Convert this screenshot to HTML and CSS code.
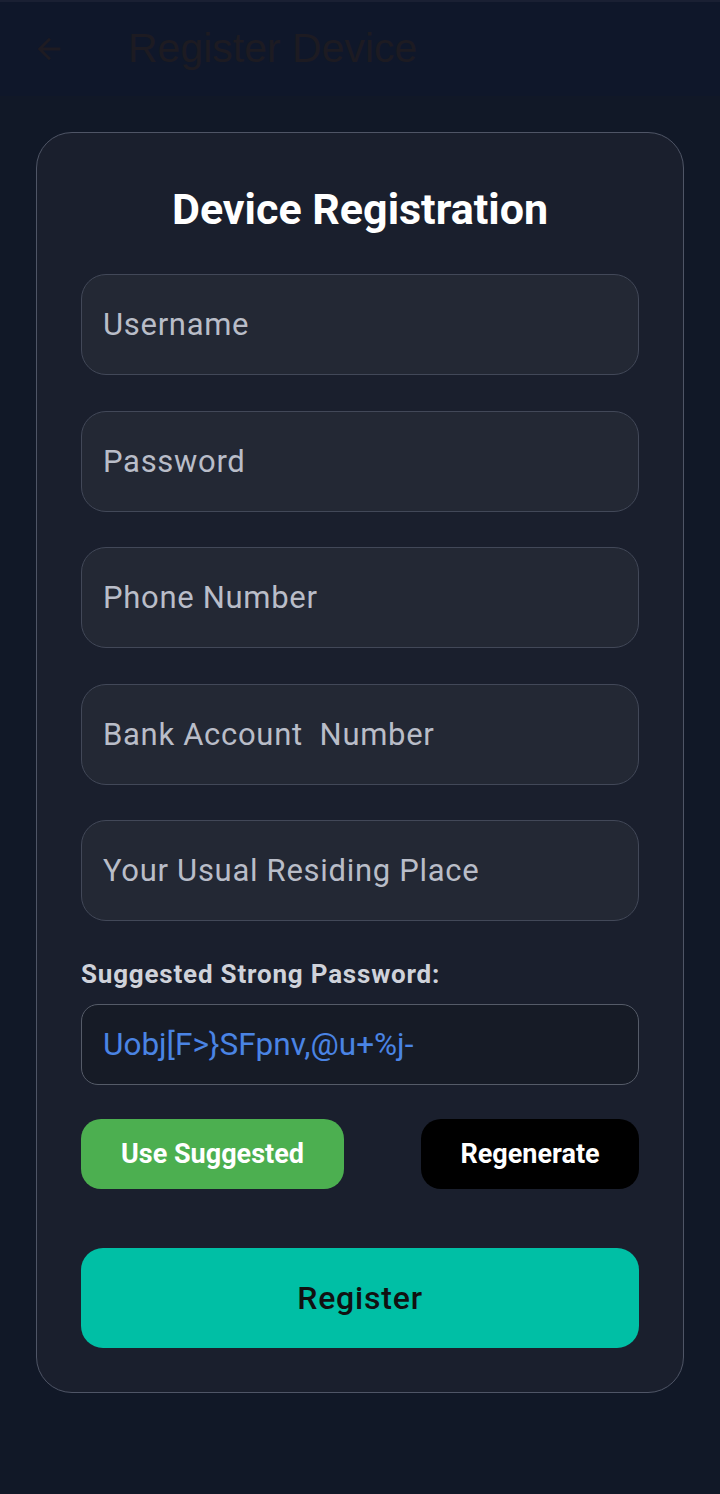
FILE: index.html
```html
<!DOCTYPE html>
<html lang="en">
<head>
<meta charset="utf-8">
<title>Register Device</title>
<link rel="stylesheet" href="styles.css">
</head>
<body>
<header class="appbar">
  <svg class="back" viewBox="0 0 24 24" width="34" height="34" aria-hidden="true"><path d="M20 11H7.83l5.59-5.59L12 4l-8 8 8 8 1.41-1.41L7.83 13H20v-2z"/></svg>
  <span class="appbar-title">Register Device</span>
</header>
<main class="page">
  <section class="card">
    <h1 class="card-title">Device Registration</h1>
    <div class="fields">
      <div class="field">Username</div>
      <div class="field">Password</div>
      <div class="field">Phone Number</div>
      <div class="field">Bank Account&nbsp; Number</div>
      <div class="field">Your Usual Residing Place</div>
    </div>
    <div class="suggest-label">Suggested Strong Password:</div>
    <div class="suggest-box">Uobj[F&gt;}SFpnv,@u+%j-</div>
    <div class="actions">
      <button class="btn btn-green">Use Suggested</button>
      <button class="btn btn-black">Regenerate</button>
    </div>
    <button class="btn-register">Register</button>
  </section>
</main>
</body>
</html>
```
FILE: styles.css
```css
* { box-sizing: border-box; }
html, body {
  margin: 0;
  padding: 0;
  background: #111827;
  font-family: Roboto, "Noto Sans", Arial, sans-serif;
  width: 720px;
  height: 1494px;
  overflow: hidden;
}
.appbar {
  height: 96px;
  background: #0f172a;
  display: flex;
  align-items: center;
  padding-left: 32px;
  border-top: 2px solid #1a2033;
}
.back {
  fill: #1e1b22;
  margin-right: 62px;
}
.appbar-title {
  font-family: "Liberation Sans", Arial, sans-serif;
  font-size: 41px;
  color: #1d1b22;
  margin-top: -2px;
}
.page {
  padding: 36px 36px 0;
}
.card {
  background: #1a1f2d;
  border: 1.5px solid #4f5566;
  border-radius: 36px;
  padding: 49px 44px 44px;
  display: flex;
  flex-direction: column;
}
.card-title {
  margin: 0 0 38px;
  text-align: center;
  color: #ffffff;
  font-size: 43px;
  font-weight: 700;
  line-height: 54px;
}
.fields {
  display: flex;
  flex-direction: column;
  gap: 35.5px;
}
.field {
  height: 101px;
  border: 1.5px solid #424858;
  background: #232834;
  border-radius: 25px;
  display: flex;
  align-items: center;
  padding-left: 21px;
  font-size: 31px;
  letter-spacing: 0.7px;
  color: #b9bdc8;
  white-space: pre;
}
.suggest-label {
  margin-top: 38px;
  color: #cfd2da;
  font-size: 26px;
  font-weight: 700;
  line-height: 30px;
  letter-spacing: 0.8px;
}
.suggest-box {
  margin-top: 15px;
  height: 81px;
  border: 1.5px solid #555b68;
  background: #161b26;
  border-radius: 17px;
  display: flex;
  align-items: center;
  padding-left: 21px;
  font-size: 31.5px;
  color: #4a84e4;
}
.actions {
  margin-top: 34px;
  display: flex;
  justify-content: space-between;
}
.btn {
  height: 70px;
  border: none;
  border-radius: 20px;
  color: #ffffff;
  font-family: Roboto, Arial, sans-serif;
  font-size: 27px;
  font-weight: 700;
  padding: 0;
}
.btn-green {
  width: 263px;
  background: #4caf50;
}
.btn-black {
  width: 218px;
  background: #000000;
}
.btn-register {
  margin-top: 59px;
  height: 100px;
  border: none;
  border-radius: 22px;
  background: #00bfa5;
  color: #111111;
  font-family: Roboto, Arial, sans-serif;
  font-size: 32px;
  font-weight: 500;
  letter-spacing: 0.8px;
  width: 100%;
}
```
